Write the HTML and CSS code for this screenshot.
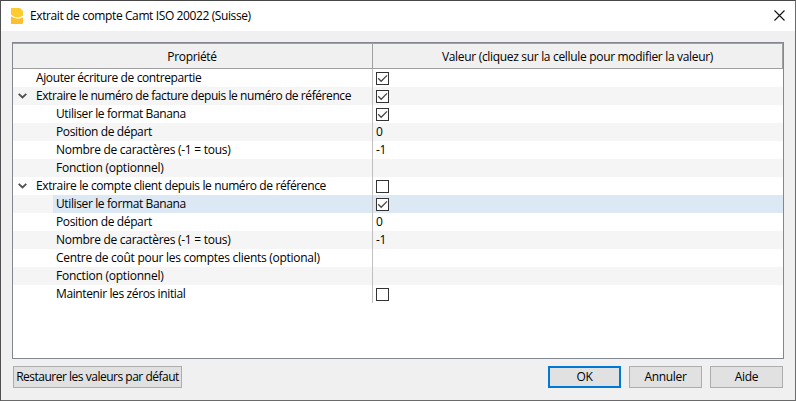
FILE: index.html
```html
<!DOCTYPE html>
<html lang="fr">
<head>
<meta charset="utf-8">
<title>Extrait de compte Camt ISO 20022 (Suisse)</title>
<link rel="stylesheet" href="styles.css">
</head>
<body>
<svg class="defs" width="0" height="0">
  <symbol id="tick" viewBox="0 0 13 13"><path d="M2.2 6.3 L5.2 9.3 L11 3.4" fill="none" stroke="#484848" stroke-width="1.3"/></symbol>
  <symbol id="chevron" viewBox="0 0 9 6"><path d="M.7 .8 L4.5 4.5 L8.3 .8" fill="none" stroke="#505050" stroke-width="1.8"/></symbol>
</svg>
<main class="dialog">
  <header class="titlebar">
    <svg class="logo" width="12" height="16" viewBox="0 0 12 16"><path d="M0 0 H9 L12 3 V7.6 Q6 11.8 0 6.8 Z" fill="#fdca30"/><path d="M0 8.2 Q6 12.6 12 9.2 V14.8 Q12 16 10.5 16 H0 Z" fill="#fdbf2d"/></svg>
    <h1 class="title"><span>Extrait de compte Camt ISO 20022 (Suisse)</span></h1>
    <svg class="close" width="11" height="11" viewBox="0 0 11 11"><path d="M.5 .5 L10.5 10.5 M10.5 .5 L.5 10.5" stroke="#111" stroke-width="1.1"/></svg>
  </header>
  <section class="tree">
    <div class="head"><div class="prop"><span>Propriété</span></div><div class="value"><span>Valeur (cliquez sur la cellule pour modifier la valeur)</span></div></div>
    <div class="row"><div class="prop tight"><span>Ajouter écriture de contrepartie</span></div><div class="value"><i class="check"><svg><use href="#tick"/></svg></i></div></div>
    <div class="row"><div class="prop tighter"><svg class="chevron"><use href="#chevron"/></svg><span>Extraire le numéro de facture depuis le numéro de référence</span></div><div class="value"><i class="check"><svg><use href="#tick"/></svg></i></div></div>
    <div class="row child"><div class="prop tight"><span>Utiliser le format Banana</span></div><div class="value"><i class="check"><svg><use href="#tick"/></svg></i></div></div>
    <div class="row child"><div class="prop tight"><span>Position de départ</span></div><div class="value"><span>0</span></div></div>
    <div class="row child"><div class="prop loose"><span>Nombre de caractères (-1 = tous)</span></div><div class="value"><span>-1</span></div></div>
    <div class="row child"><div class="prop looser"><span>Fonction (optionnel)</span></div><div class="value"></div></div>
    <div class="row"><div class="prop tight"><svg class="chevron"><use href="#chevron"/></svg><span>Extraire le compte client depuis le numéro de référence</span></div><div class="value"><i class="check"></i></div></div>
    <div class="row child selected"><div class="prop tight"><span>Utiliser le format Banana</span></div><div class="value"><i class="check"><svg><use href="#tick"/></svg></i></div></div>
    <div class="row child"><div class="prop tight"><span>Position de départ</span></div><div class="value"><span>0</span></div></div>
    <div class="row child"><div class="prop loose"><span>Nombre de caractères (-1 = tous)</span></div><div class="value"><span>-1</span></div></div>
    <div class="row child"><div class="prop loose"><span>Centre de coût pour les comptes clients (optional)</span></div><div class="value"></div></div>
    <div class="row child"><div class="prop looser"><span>Fonction (optionnel)</span></div><div class="value"></div></div>
    <div class="row child"><div class="prop tight"><span>Maintenir les zéros initial</span></div><div class="value"><i class="check"></i></div></div>
  </section>
  <footer class="actions">
    <button class="restore"><span>Restaurer les valeurs par défaut</span></button>
    <button class="default"><span>OK</span></button>
    <button><span>Annuler</span></button>
    <button><span>Aide</span></button>
  </footer>
</main>
</body>
</html>
```
FILE: styles.css
```css
* { box-sizing: border-box; }
body, button { font: 12px/18px "Open Sans", "Noto Sans", sans-serif; letter-spacing: -0.32px; color: #000; }
body { margin: 0; overflow: hidden; }
.defs { position: absolute; }
.dialog { width: 796px; height: 401px; border: 1px solid; border-color: #484848 #6a6a6a #6a6a6a #505050; background: #f0f0f0; display: flex; flex-direction: column; }
.titlebar { height: 30px; background: #fff; display: flex; align-items: center; padding: 0 10px; flex: none; }
.title { font-size: 12px; font-weight: 400; margin: 0 auto 0 7px; letter-spacing: -0.39px; }
.close { margin-bottom: 1px; }
.tree { margin: 11px 11px 0; height: 317px; border: 1px solid #828790; background: #fff; }
.head, .row { display: grid; grid-template-columns: 359px 1fr; }
.head { height: 26px; background: #f0f0f0; border: 1px solid #a0a0a0; border-left: 0; line-height: 26px; text-align: center; }
.head .value { border-left: 1px solid #a0a0a0; }
.head .prop { margin-right: 1px; }
.row { height: 18px; }
.row:nth-child(odd) { background: #f5f5f5; }
.row .prop { padding-left: 23px; display: flex; align-items: center; }
.row .value { border-left: 1px solid #c0c0c0; padding-left: 3px; display: flex; align-items: center; }
.row.child .prop { margin-left: 40px; padding-left: 3px; }
.tight { letter-spacing: -0.38px; }
.tighter { letter-spacing: -0.42px; }
.loose { letter-spacing: -0.28px; }
.looser { letter-spacing: -0.23px; }
.selected .prop, .selected .value { background: #dce9f5; }
.chevron { width: 9px; height: 6px; margin: 0 9px 0 -18px; }
.check { width: 13px; height: 13px; border: 1px solid #333; background: #fff; flex: none; }
.check svg { display: block; width: 13px; height: 13px; margin: -1px; }
.actions { display: flex; gap: 8px; margin: 7px 12px 0; }
button { width: 73px; height: 22px; padding: 0; border: 1px solid #adadad; background: #e1e1e1; line-height: 20px; white-space: nowrap; }
.restore { width: 169px; margin-right: auto; letter-spacing: -0.49px; }
.default { border: 2px solid #0078d7; line-height: 18px; }
```
